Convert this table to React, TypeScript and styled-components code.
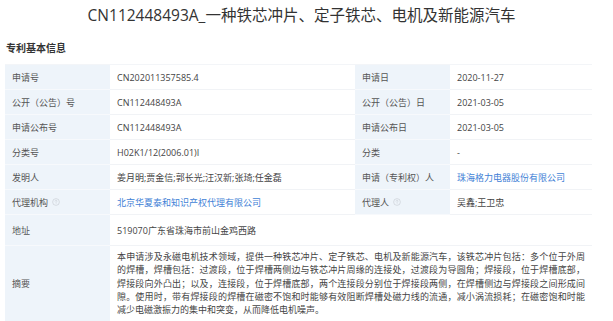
import * as React from 'react';
import styled, { createGlobalStyle } from 'styled-components';

const GlobalStyle = createGlobalStyle`
  html, body {
    margin: 0;
    padding: 0;
    background: #ffffff;
  }
  body {
    font-family: "Open Sans", "Noto Sans CJK SC", sans-serif;
    color: #333;
  }
`;

type Row = {
  label: string;
  value: string;
  tip?: boolean;
  link?: boolean;
};

const pairs: [Row, Row][] = [
  [
    { label: '申请号', value: 'CN202011357585.4' },
    { label: '申请日', value: '2020-11-27' },
  ],
  [
    { label: '公开（公告）号', value: 'CN112448493A' },
    { label: '公开（公告）日', value: '2021-03-05' },
  ],
  [
    { label: '申请公布号', value: 'CN112448493A' },
    { label: '申请公布日', value: '2021-03-05' },
  ],
  [
    { label: '分类号', value: 'H02K1/12(2006.01)I' },
    { label: '分类', value: '-' },
  ],
  [
    { label: '发明人', value: '姜月明;贾金信;郭长光;汪汉新;张琦;任金磊' },
    { label: '申请（专利权）人', value: '珠海格力电器股份有限公司', link: true },
  ],
  [
    { label: '代理机构', value: '北京华夏泰和知识产权代理有限公司', tip: true, link: true },
    { label: '代理人', value: '吴鑫;王卫忠', tip: true },
  ],
];

const abstractLines = [
  '本申请涉及永磁电机技术领域，提供一种铁芯冲片、定子铁芯、电机及新能源汽车，该铁芯冲片包括：多个位于外周',
  '的焊槽，焊槽包括：过渡段，位于焊槽两侧边与铁芯冲片周缘的连接处，过渡段为导圆角；焊接段，位于焊槽底部，',
  '焊接段向外凸出；以及，连接段，位于焊槽底部，两个连接段分别位于焊接段两侧，在焊槽侧边与焊接段之间形成间',
  '隙。使用时，带有焊接段的焊槽在磁密不饱和时能够有效阻断焊槽处磁力线的流通，减小涡流损耗；在磁密饱和时能',
  '减少电磁激振力的集中和突变，从而降低电机噪声。',
];

const HelpIcon = () => (
  <TipIcon viewBox="0 0 10 10" aria-hidden>
    <circle cx="5" cy="5" r="4.2" fill="none" stroke="#c8cdd3" strokeWidth="0.8" />
    <path
      d="M3.8 4 C3.8 3.2 4.4 2.8 5 2.8 C5.7 2.8 6.2 3.3 6.2 3.9 C6.2 4.6 5.1 4.7 5.1 5.6"
      fill="none"
      stroke="#c8cdd3"
      strokeWidth="0.8"
      strokeLinecap="round"
    />
    <circle cx="5.1" cy="7" r="0.5" fill="#c8cdd3" />
  </TipIcon>
);

const Cell = ({ row }: { row: Row }) => (
  <>
    <Label>
      {row.label}
      {row.tip && <HelpIcon />}
    </Label>
    <Value link={row.link}>{row.value}</Value>
  </>
);

const App = () => (
  <>
    <GlobalStyle />
    <Page>
      <Title>CN112448493A_一种铁芯冲片、定子铁芯、电机及新能源汽车</Title>
      <SectionTitle>专利基本信息</SectionTitle>
      <InfoGrid>
        {pairs.map(([a, b]) => (
          <React.Fragment key={a.label}>
            <Cell row={a} />
            <Cell row={b} />
          </React.Fragment>
        ))}
        <Label tall>地址</Label>
        <Value wide tall>
          519070广东省珠海市前山金鸡西路
        </Value>
        <Label>摘要</Label>
        <Abstract>
          {abstractLines.map((line, i) => (
            <AbstractLine key={i} last={i === abstractLines.length - 1}>
              {line}
            </AbstractLine>
          ))}
        </Abstract>
      </InfoGrid>
    </Page>
  </>
);

export default App;

const Page = styled.div`
  width: 587px;
  margin-left: 5px;
`;

const Title = styled.h1`
  margin: 0;
  height: 30px;
  line-height: 30px;
  padding-left: 6px;
  text-align: center;
  font-size: 15.5px;
  font-weight: 400;
  color: #333;
  white-space: nowrap;
`;

const SectionTitle = styled.h2`
  margin: 11px 0 9px 1px;
  font-size: 10px;
  line-height: 14px;
  font-weight: 700;
  color: #333;
`;

const InfoGrid = styled.div`
  display: grid;
  grid-template-columns: 105px 245px 95px 142px;
  border-top: 1px solid #f3f5f8;
`;

const Label = styled.div<{ tall?: boolean }>`
  display: flex;
  align-items: center;
  gap: 4px;
  height: ${(p) => (p.tall ? '30px' : 'auto')};
  min-height: 24px;
  padding: 0 7px;
  background: #eef4fa;
  border-bottom: 1px solid #f7f9fc;
  font-size: 9px;
  color: #555;
  white-space: nowrap;
`;

const Value = styled.div<{ link?: boolean; wide?: boolean; tall?: boolean }>`
  display: flex;
  align-items: center;
  grid-column: ${(p) => (p.wide ? 'span 3' : 'auto')};
  height: ${(p) => (p.tall ? '30px' : 'auto')};
  min-height: 24px;
  padding: 0 7px;
  background: #fff;
  border-bottom: 1px solid #f1f3f6;
  font-size: 9px;
  color: ${(p) => (p.link ? '#3f7fd6' : '#444')};
  white-space: nowrap;
`;

const TipIcon = styled.svg`
  width: 8px;
  height: 8px;
`;

const Abstract = styled.div`
  grid-column: span 3;
  padding: 4px 7px 6px;
  font-size: 9px;
  line-height: 13.3px;
  color: #444;
`;

const AbstractLine = styled.div<{ last?: boolean }>`
  white-space: nowrap;
  text-align: justify;
  text-align-last: ${(p) => (p.last ? 'left' : 'justify')};
`;
